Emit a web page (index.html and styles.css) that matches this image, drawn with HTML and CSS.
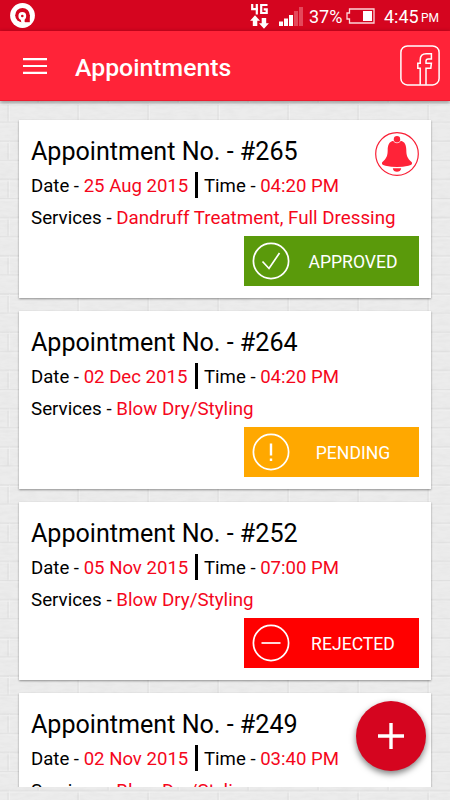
FILE: index.html
```html
<!DOCTYPE html>
<html lang="en">
<head>
<meta charset="utf-8">
<title>Appointments</title>
<link rel="stylesheet" href="styles.css">
</head>
<body>
<div class="screen">
  <svg class="wall" width="450" height="800" aria-hidden="true">
    <defs>
      <filter id="grain" x="0" y="0" width="100%" height="100%">
        <feTurbulence type="fractalNoise" baseFrequency=".08 .3" numOctaves="3" seed="4"/>
        <feColorMatrix values="0 0 0 0 .5  0 0 0 0 .5  0 0 0 0 .5  .2 0 0 0 -.07"/>
      </filter>
      <pattern id="bricks" width="70" height="38.2" patternUnits="userSpaceOnUse" y="7">
        <path d="M0 .5H70M0 19.6H70M38 0V19M8 19V38" fill="none" stroke="#e2e2e2" stroke-width="1.3"/>
        <path d="M0 2H70M0 21H70M39.5 1V19M9.5 20V38" fill="none" stroke="#f1f1f1" stroke-width="1"/>
      </pattern>
    </defs>
    <rect width="450" height="800" fill="#ececec"/>
    <rect width="450" height="800" fill="url(#bricks)"/>
    <rect width="450" height="800" filter="url(#grain)"/>
  </svg>

  <div class="status-bar">
    <svg class="carrier" viewBox="0 0 25 25"><circle cx="12.5" cy="12.5" r="12.4" fill="#fff"/><circle cx="12.5" cy="12.2" r="7.3" fill="#d5051f"/><path d="M15 12H19.8V19.2H15Z" fill="#d5051f"/><circle cx="12.3" cy="13" r="3.9" fill="#fff"/><circle cx="12.3" cy="13" r="1.3" fill="#d5051f"/><path d="M10.5 15.5H14.6V20H11.5Z" fill="#fff"/></svg>
    <svg class="network" viewBox="0 0 20 26"><path d="M2.2 1V6.2H8M6.8 1V11.5M17.5 2H11.2V10H16.7V6.4H13.7" fill="none" stroke="#fff" stroke-width="2.2"/><path d="M5 12.2L10 17.8H7.3V23H2.8V17.8H.1ZM14 25.8L9 20.2H11.7V15H16.2V20.2H18.9Z" fill="#fff"/></svg>
    <svg class="signal" viewBox="0 0 24 19"><path d="M0 14.5H4V19H0ZM5 11.5H9V19H5ZM10 8H14V19H10Z" fill="#fff"/><path d="M15 4H19V19H15ZM20 0H24V19H20Z" fill="#e4485b"/></svg>
    <span class="percent">37%</span>
    <svg class="battery" viewBox="0 0 29 16"><path d="M3.5 1H28V15H3.5V11H1V5H3.5Z" fill="none" stroke="#fbd5d9" stroke-width="1.3"/><path d="M17 3H26V13H17Z" fill="#fff"/></svg>
    <span class="clock">4:45</span><span class="meridiem">PM</span>
  </div>

  <header class="app-bar">
    <svg class="menu" viewBox="0 0 24 16"><path d="M0 1.2H24M0 8H24M0 14.8H24" stroke="#fff" stroke-width="2.2"/></svg>
    <h1>Appointments</h1>
    <svg class="facebook" viewBox="0 0 40 41"><rect x=".9" y=".9" width="38.2" height="39" rx="6.5" fill="none" stroke="#fff" stroke-width="1.5"/><path d="M20.2 39.8V23.2H17.8V18.2H20.2V15C20.2 11 22.6 8.8 26.2 8.8H31.4V14H28.3C26.5 14 26 14.8 26 16.2V18.2H31.4L30.8 23.2H26V39.8" fill="none" stroke="#fff" stroke-width="1.5"/></svg>
  </header>

  <main class="list">
    <article class="card">
      <h2>Appointment No. - #265</h2>
      <p class="when"><span class="date">Date - <b>25 Aug 2015</b></span><span class="time">Time - <b>04:20 PM</b></span></p>
      <p class="services">Services - <b>Dandruff Treatment, Full Dressing</b></p>
      <div class="status approved"><svg viewBox="0 0 38 38"><circle cx="19" cy="19" r="17.6"/><path d="M10.5 19.5L17 26.5L27.5 11"/></svg><span>APPROVED</span></div>
      <svg class="bell" viewBox="0 0 44 44"><circle cx="22" cy="22" r="21.3" fill="none" stroke="#f91f35" stroke-width="1.2"/><circle cx="22" cy="7.2" r="3.2" fill="#ff2338"/><path d="M18.3 8.7C19.2 12 24.8 12 25.7 8.7C30 9.7 31.2 13.2 31.3 18C31.4 23.5 32.2 26.3 36.8 30.2C37.8 32.5 35.5 33.2 33.5 33.7C26 35.4 18 35.4 10.5 33.7C8.5 33.2 6.2 32.5 7.2 30.2C11.8 26.3 12.6 23.5 12.7 18C12.8 13.2 14 9.7 18.3 8.7ZM17.8 36.3H26.2C26 41 18 41 17.8 36.3Z" fill="#ff2338"/></svg>
    </article>
    <article class="card">
      <h2>Appointment No. - #264</h2>
      <p class="when"><span class="date">Date - <b>02 Dec 2015</b></span><span class="time">Time - <b>04:20 PM</b></span></p>
      <p class="services">Services - <b>Blow Dry/Styling</b></p>
      <div class="status pending"><svg viewBox="0 0 38 38"><circle cx="19" cy="19" r="17.6"/><path d="M19 10.5V22.5M19 25.5V28" stroke-width="2.4"/></svg><span>PENDING</span></div>
    </article>
    <article class="card">
      <h2>Appointment No. - #252</h2>
      <p class="when"><span class="date">Date - <b>05 Nov 2015</b></span><span class="time">Time - <b>07:00 PM</b></span></p>
      <p class="services">Services - <b>Blow Dry/Styling</b></p>
      <div class="status rejected"><svg viewBox="0 0 38 38"><circle cx="19" cy="19" r="17.6"/><path d="M9.5 19H28.5"/></svg><span>REJECTED</span></div>
    </article>
    <article class="card">
      <h2>Appointment No. - #249</h2>
      <p class="when"><span class="date">Date - <b>02 Nov 2015</b></span><span class="time">Time - <b>03:40 PM</b></span></p>
      <p class="services">Services - <b>Blow Dry/Styling</b></p>
    </article>
  </main>

  <button class="fab" aria-label="Add"><svg viewBox="0 0 26 26"><path d="M13 0V26M0 13H26" stroke="#fff" stroke-width="3.4"/></svg></button>
</div>
</body>
</html>
```

FILE: styles.css
```css
* { box-sizing: border-box; }
body { margin: 0; font-family: Roboto, "Liberation Sans", sans-serif; color: #000; }
h1, h2, p { margin: 0; font-weight: 400; white-space: nowrap; }
svg { display: block; flex: none; }
.screen { position: relative; width: 450px; height: 800px; overflow: hidden; display: flex; flex-direction: column; isolation: isolate; }
.wall { position: absolute; inset: 0; z-index: -1; }

.status-bar { height: 31px; flex: none; background: #d5051f; color: #fff; display: flex; align-items: center; padding-left: 10px; font-size: 18px; line-height: 31px; }
.carrier { width: 25px; height: 25px; }
.network { width: 20px; height: 26px; margin-left: 215px; }
.signal { width: 24px; height: 19px; margin-left: 9px; margin-top: 2px; }
.percent { width: 37px; margin-left: 6px; padding-top: 2px; }
.battery { width: 29px; height: 16px; }
.clock { width: 37px; margin-left: 9px; padding-top: 2px; }
.meridiem { font-size: 12px; padding-top: 6px; }

.app-bar { height: 70px; flex: none; display: flex; align-items: center; padding: 0 10px 0 23px; background: #ff2338; border-bottom: 1px solid #ed1c30; box-shadow: 0 1px 4px rgba(0,0,0,.45); }
.menu { width: 24px; height: 16px; }
.app-bar h1 { flex: 1; margin: 5px 0 0 28px; font-size: 24.8px; font-weight: 500; color: #fff; line-height: 30px; }
.facebook { width: 40px; height: 41px; }

.list { height: 686px; overflow: hidden; padding: 19px 19px 0; display: flex; flex-direction: column; gap: 13px; }
.card { position: relative; flex: none; height: 178px; background: #fff; padding: 15px 12px 0 12px; box-shadow: 0 1px 2px rgba(0,0,0,.4); display: flex; flex-direction: column; }
.card h2 { height: 32px; font-size: 25.1px; line-height: 34px; }
.card b { font-weight: 400; color: #f5071c; }
.when { display: flex; height: 36px; align-items: center; font-size: 18.6px; }
.date { width: 167px; height: 26px; line-height: 29px; border-right: 3px solid #000; }
.time { height: 26px; padding-left: 6px; line-height: 29px; }
.services { height: 28px; font-size: 18.78px; line-height: 31px; }
.status { width: 175px; height: 50px; margin: 5px 0 0 213px; padding-left: 8px; display: flex; align-items: center; color: #fff; font-size: 17.6px; }
.status svg { width: 38px; height: 38px; fill: none; stroke: #fff; stroke-width: 1.7; }
.status span { flex: 1; text-align: center; padding: 1px 3px 0 0; }
.approved { background: #5a9a0b; }
.pending { background: #ffa800; }
.rejected { background: #f00; }
.bell { position: absolute; right: 12px; top: 12px; width: 44px; height: 44px; }

.fab { position: absolute; left: 356px; top: 701px; width: 70px; height: 70px; padding: 0; border: 0; border-radius: 50%; background: #d5051f; display: grid; place-items: center; box-shadow: 0 3px 6px rgba(0,0,0,.5); }
.fab svg { width: 26px; height: 26px; }
```
